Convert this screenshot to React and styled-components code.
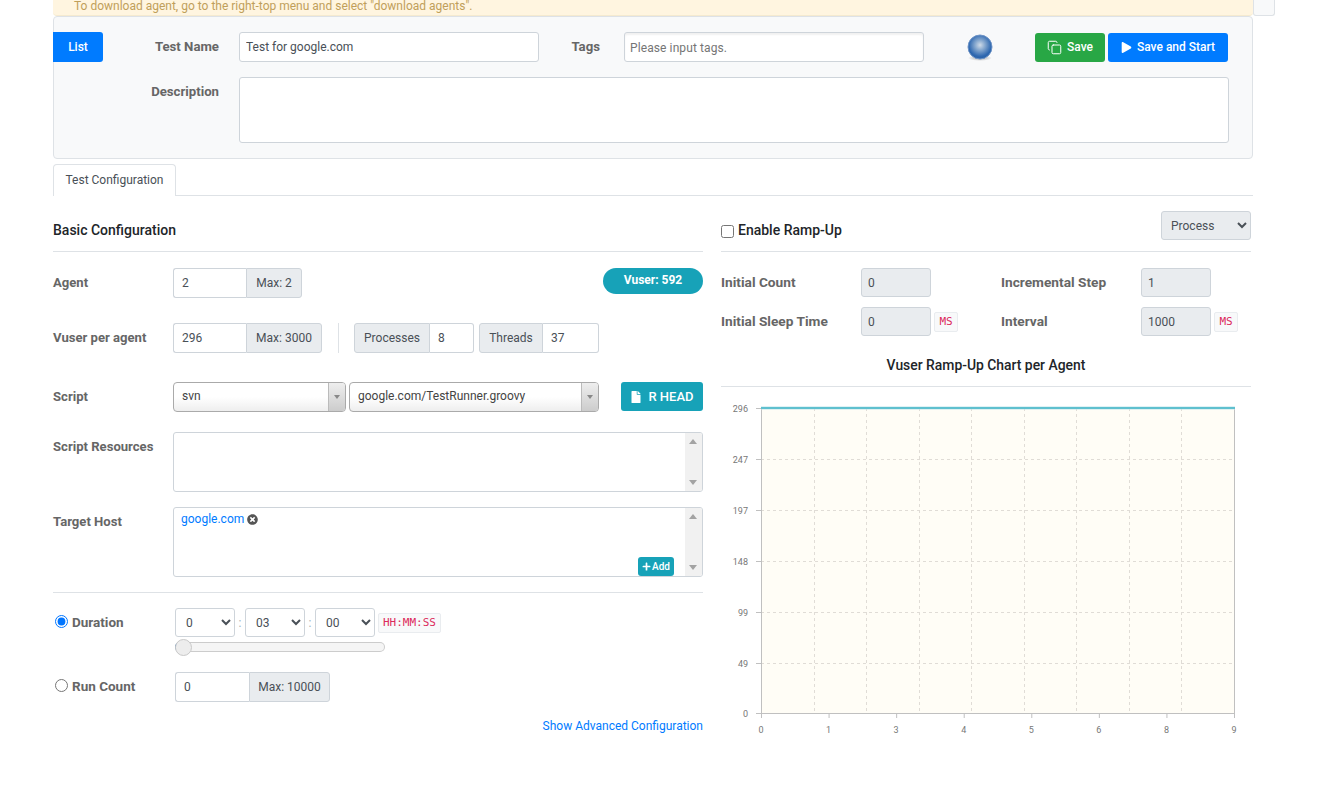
import React from 'react'
import styled, { createGlobalStyle } from 'styled-components'
import { FaFile, FaPlay, FaPlus, FaTimesCircle } from 'react-icons/fa'
import { Copy } from 'lucide-react'

const GlobalStyle = createGlobalStyle`
    * {
        box-sizing: border-box;
    }
    body {
        margin: 0;
        background: #fff;
        font-family: Roboto, "Liberation Sans", sans-serif;
        font-size: 12px;
        color: #495057;
    }
`

const App = () => {
    return (
        <Page>
            <GlobalStyle />
            <TopRow>
                <Alert>To download agent, go to the right-top menu and select "download agents".</Alert>
                <MenuStub />
            </TopRow>
            <Panel>
                <PanelRow>
                    <ListButton>List</ListButton>
                    <HeadLabel $width={116}>Test Name</HeadLabel>
                    <HeadInput defaultValue="Test for google.com" />
                    <HeadLabel $width={61}>Tags</HeadLabel>
                    <TagsInput placeholder="Please input tags." />
                    <Globe />
                    <ActionButton $color="#28a745" $width={70} $left={42}>
                        <Copy size={15} strokeWidth={1.6} /> Save
                    </ActionButton>
                    <ActionButton $color="#007bff" $width={120} $left={3}>
                        <FaPlay size={11} /> Save and Start
                    </ActionButton>
                </PanelRow>
                <DescriptionRow>
                    <DescriptionLabel>Description</DescriptionLabel>
                    <DescriptionBox />
                </DescriptionRow>
            </Panel>
            <TabBar>
                <Tab>Test Configuration</Tab>
            </TabBar>
            <Columns>
                <BasicColumn />
                <RampUpColumn />
            </Columns>
        </Page>
    )
}

const BasicColumn = () => (
    <LeftColumn>
        <SectionHeader>Basic Configuration</SectionHeader>

        <FormRow $top={16}>
            <FieldLabel>Agent</FieldLabel>
            <InputGroup>
                <GroupInput $width={73} defaultValue="2" />
                <Addon $width={56} $last>Max: 2</Addon>
            </InputGroup>
            <VuserPill>Vuser: 592</VuserPill>
        </FormRow>

        <FormRow $top={25}>
            <FieldLabel>Vuser per agent</FieldLabel>
            <InputGroup>
                <GroupInput $width={73} defaultValue="296" />
                <Addon $width={76} $last>Max: 3000</Addon>
            </InputGroup>
            <VerticalRule />
            <InputGroup>
                <Addon $width={76}>Processes</Addon>
                <GroupInput $width={44} $last defaultValue="8" />
            </InputGroup>
            <ThreadsGroup>
                <Addon $width={64}>Threads</Addon>
                <GroupInput $width={56} $last defaultValue="37" />
            </ThreadsGroup>
        </FormRow>

        <FormRow $top={29}>
            <FieldLabel>Script</FieldLabel>
            <ComboBox $width={173}>
                <ComboText>svn</ComboText>
                <ComboArrow />
            </ComboBox>
            <ComboBox $width={250} $left={3}>
                <ComboText>google.com/TestRunner.groovy</ComboText>
                <ComboArrow />
            </ComboBox>
            <HeadButton><FaFile size={12} /> R HEAD</HeadButton>
        </FormRow>

        <FormRow $top={20} $start>
            <TopLabel>Script Resources</TopLabel>
            <ListBox $height={60}>
                <FakeScrollbar />
            </ListBox>
        </FormRow>

        <FormRow $top={15} $start>
            <TopLabel>Target Host</TopLabel>
            <ListBox $height={70}>
                <HostTag>
                    google.com <FaTimesCircle size={11} color="#555" />
                </HostTag>
                <AddButton><FaPlus size={9} />Add</AddButton>
                <FakeScrollbar />
            </ListBox>
        </FormRow>

        <Rule />

        <DurationRow>
            <RadioLabel>
                <input type="radio" name="limit" defaultChecked />
                Duration
            </RadioLabel>
            <div>
                <TimeRow>
                    <TimeSelect defaultValue="0">
                        <option value="0">0</option>
                    </TimeSelect>
                    <Colon>:</Colon>
                    <TimeSelect defaultValue="03">
                        <option value="03">03</option>
                    </TimeSelect>
                    <Colon>:</Colon>
                    <TimeSelect defaultValue="00">
                        <option value="00">00</option>
                    </TimeSelect>
                    <FormatHint>HH:MM:SS</FormatHint>
                </TimeRow>
                <SliderTrack>
                    <SliderThumb />
                </SliderTrack>
            </div>
        </DurationRow>

        <RunCountRow>
            <RadioLabel>
                <input type="radio" name="limit" />
                Run Count
            </RadioLabel>
            <InputGroup>
                <GroupInput $width={74} defaultValue="0" />
                <Addon $width={81} $last>Max: 10000</Addon>
            </InputGroup>
        </RunCountRow>

        <AdvancedLink href="#advanced">Show Advanced Configuration</AdvancedLink>
    </LeftColumn>
)

const RampUpColumn = () => (
    <RightColumn>
        <RampHeader>
            <RampToggle>
                <input type="checkbox" />
                Enable Ramp-Up
            </RampToggle>
            <ProcessSelect defaultValue="Process">
                <option>Process</option>
            </ProcessSelect>
        </RampHeader>

        <RampGrid>
            <RampLabel>Initial Count</RampLabel>
            <RampCell>
                <RampInput disabled defaultValue="0" />
            </RampCell>
            <RampLabel>Incremental Step</RampLabel>
            <RampCell>
                <RampInput disabled defaultValue="1" />
            </RampCell>
            <RampLabel>Initial Sleep Time</RampLabel>
            <RampCell>
                <RampInput disabled defaultValue="0" />
                <UnitHint>MS</UnitHint>
            </RampCell>
            <RampLabel>Interval</RampLabel>
            <RampCell>
                <RampInput disabled defaultValue="1000" />
                <UnitHint>MS</UnitHint>
            </RampCell>
        </RampGrid>

        <ChartTitle>Vuser Ramp-Up Chart per Agent</ChartTitle>
        <RampChart />
    </RightColumn>
)

const plot = { left: 40, right: 513, top: 12, bottom: 317 }
const yLabels = [
    ['296', 12], ['247', 63], ['197', 114], ['148', 165], ['99', 216], ['49', 267], ['0', 317],
]
const xLabels = ['0', '1', '3', '4', '5', '6', '8', '9']
const plotWidth = plot.right - plot.left

const RampChart = () => (
    <ChartSvg width="530" height="350" viewBox="0 0 530 350">
        <rect x={plot.left} y={plot.top} width={plotWidth} height={plot.bottom - plot.top} fill="#fffdf6" />
        {yLabels.slice(1, 6).map(([label, y]) => (
            <line key={label} x1={plot.left} x2={plot.right - 2} y1={y + 0.5} y2={y + 0.5} stroke="#e0dcd6" strokeDasharray="3 3" />
        ))}
        {Array.from({ length: 8 }, (_, i) => {
            const x = Math.round(plot.left + ((i + 1) * plotWidth) / 9) + 0.5
            return <line key={i} x1={x} x2={x} y1={plot.top} y2={plot.bottom} stroke="#e0dcd6" strokeDasharray="3 3" />
        })}
        <path d={`M${plot.left + 0.5} ${plot.top} V${plot.bottom + 0.5} H${plot.right + 0.5} V${plot.top}`} fill="none" stroke="#c0c0c0" />
        <line x1={plot.left} x2={plot.right + 1} y1={plot.top} y2={plot.top} stroke="#bfe6ec" strokeWidth="3" />
        <line x1={plot.left} x2={plot.right + 1} y1={plot.top} y2={plot.top} stroke="#3fb3c6" strokeWidth="1.5" />
        {yLabels.map(([label, y]) => (
            <g key={label}>
                <line x1={plot.left - 5} x2={plot.left} y1={y + 0.5} y2={y + 0.5} stroke="#c0c0c0" />
                <AxisText x={plot.left - 13} y={y + 3.5} textAnchor="end">{label}</AxisText>
            </g>
        ))}
        {xLabels.map((label, i) => {
            const x = plot.left + (i * plotWidth) / 7
            return (
                <g key={label}>
                    <line x1={x + 0.5} x2={x + 0.5} y1={plot.bottom} y2={plot.bottom + 5} stroke="#c0c0c0" />
                    <AxisText x={x} y={plot.bottom + 20} textAnchor="middle">{label}</AxisText>
                </g>
            )
        })}
    </ChartSvg>
)

const Globe = () => (
    <GlobeIcon width="26" height="27" viewBox="0 0 26 27">
        <defs>
            <radialGradient id="ball" cx="50%" cy="42%" r="55%">
                <stop offset="0%" stopColor="#cfdbe8" />
                <stop offset="40%" stopColor="#82a5cd" />
                <stop offset="85%" stopColor="#2f68b0" />
                <stop offset="100%" stopColor="#2a62a8" />
            </radialGradient>
            <radialGradient id="shade" cx="50%" cy="50%" r="50%">
                <stop offset="0%" stopColor="#808080" stopOpacity="0.7" />
                <stop offset="100%" stopColor="#808080" stopOpacity="0" />
            </radialGradient>
        </defs>
        <ellipse cx="13" cy="24" rx="12" ry="3" fill="url(#shade)" />
        <circle cx="13" cy="13" r="12" fill="url(#ball)" stroke="#6d93c6" />
    </GlobeIcon>
)

const Page = styled.div`
    width: 1222px;
    margin-left: 53px;
    padding-bottom: 54px;
`

const TopRow = styled.div`
    display: flex;
    height: 16px;
`

const Alert = styled.div`
    width: 1200px;
    padding-left: 21px;
    background: #fff5e0;
    color: #bf9f5b;
    line-height: 12px;
    border-bottom: 1px solid #f5ead0;
    border-radius: 0 0 4px 4px;
    white-space: nowrap;
`

const MenuStub = styled.div`
    width: 22px;
    background: #f8f9fa;
    border: 1px solid #dee2e6;
    border-top: 0;
    border-radius: 0 0 3px 3px;
`

const Panel = styled.div`
    width: 1200px;
    height: 143px;
    padding: 15px 0;
    background: #f8f9fa;
    border: 1px solid #dee2e6;
    border-radius: 4px;
`

const PanelRow = styled.div`
    display: flex;
    align-items: center;
    height: 30px;
`

const ListButton = styled.button`
    width: 50px;
    height: 30px;
    margin-left: -1px;
    padding: 0;
    border: 0;
    border-radius: 0 3px 3px 0;
    background: #007bff;
    color: #fff;
    font: 500 12px Roboto, sans-serif;
`

const HeadLabel = styled.label`
    width: ${({ $width }) => $width}px;
    padding-bottom: 1px;
    text-align: right;
    font-size: 13.2px;
    font-weight: 700;
    color: #666;
`

const TextField = styled.input`
    height: 30px;
    padding: 0 6px;
    background: #fff;
    border: 1px solid #ced4da;
    border-radius: 3px;
    color: #495057;
    font: 12px Roboto, sans-serif;
    outline: none;
`

const HeadInput = styled(TextField)`
    width: 300px;
    margin-left: 20px;
`

const TagsInput = styled(TextField)`
    width: 300px;
    margin-left: 24px;
    padding: 1px 5px 0;
    box-shadow: inset 0 2px 2px rgba(0, 0, 0, 0.06);

    &::placeholder {
        color: #757575;
        letter-spacing: 0.1px;
    }
`

const GlobeIcon = styled.svg`
    margin-left: 43px;
`

const ActionButton = styled.button`
    display: inline-flex;
    align-items: center;
    justify-content: center;
    gap: 5px;
    width: ${({ $width }) => $width}px;
    height: 29px;
    margin-left: ${({ $left }) => $left}px;
    padding: 0;
    border: 0;
    border-radius: 3px;
    background: ${({ $color }) => $color};
    color: #fff;
    font: 500 12px Roboto, sans-serif;
`

const DescriptionRow = styled.div`
    display: flex;
    margin-top: 15px;
`

const DescriptionLabel = styled(HeadLabel)`
    width: 165px;
    padding-top: 7px;
`

const DescriptionBox = styled.div`
    width: 990px;
    height: 66px;
    margin-left: 20px;
    background: #fff;
    border: 1px solid #ced4da;
    border-radius: 3px;
`

const TabBar = styled.div`
    display: flex;
    width: 1200px;
    height: 32px;
    margin-top: 5px;
    border-bottom: 1px solid #dee2e6;
`

const Tab = styled.div`
    width: 123px;
    height: 32px;
    background: #fff;
    border: 1px solid #dee2e6;
    border-bottom: 0;
    border-radius: 4px 4px 0 0;
    color: #495057;
    line-height: 30px;
    text-align: center;
`

const Columns = styled.div`
    display: flex;
    gap: 18px;
    margin-top: 15px;
`

const LeftColumn = styled.section`
    width: 650px;
`

const RightColumn = styled.section`
    width: 530px;
`

const SectionHeader = styled.div`
    height: 41px;
    padding-top: 11px;
    border-bottom: 1px solid #dee2e6;
    color: #212529;
    font-size: 14px;
    font-weight: 500;
    line-height: 17px;
`

const FormRow = styled.div`
    display: flex;
    align-items: ${({ $start }) => ($start ? 'flex-start' : 'center')};
    margin-top: ${({ $top }) => $top}px;
`

const FieldLabel = styled.label`
    flex: none;
    width: 120px;
    padding-bottom: 2px;
    font-size: 13.1px;
    font-weight: 700;
    color: #666;
`

const TopLabel = styled(FieldLabel)`
    padding-top: 7px;
`

const InputGroup = styled.div`
    display: flex;
    height: 30px;
`

const ThreadsGroup = styled(InputGroup)`
    margin-left: 5px;
`

const GroupInput = styled(TextField)`
    width: ${({ $width }) => $width}px;
    padding: 0 8px;
    border-radius: ${({ $last }) => ($last ? '0 3px 3px 0' : '3px 0 0 3px')};
    ${({ $last }) => ($last ? 'border-left: 0;' : 'border-right: 0;')}
`

const Addon = styled.span`
    display: flex;
    align-items: center;
    justify-content: center;
    width: ${({ $width }) => $width}px;
    background: #e9ecef;
    border: 1px solid #ced4da;
    border-radius: ${({ $last }) => ($last ? '0 3px 3px 0' : '3px 0 0 3px')};
    color: #495057;
    white-space: nowrap;
`

const VuserPill = styled.span`
    align-self: flex-start;
    width: 100px;
    height: 26px;
    margin-left: auto;
    background: #17a2b8;
    border-radius: 13px;
    color: #fff;
    font-weight: 700;
    line-height: 25px;
    text-align: center;
`

const VerticalRule = styled.span`
    width: 1px;
    height: 30px;
    margin: 0 15px 0 16px;
    background: #dee2e6;
`

const ComboBox = styled.div`
    display: flex;
    align-items: center;
    justify-content: space-between;
    width: ${({ $width }) => $width}px;
    height: 30px;
    margin-left: ${({ $left }) => $left || 0}px;
    padding-left: 8px;
    background: linear-gradient(#fff 50%, #eee);
    border: 1px solid #aaa;
    border-radius: 4px;
    color: #444;
    overflow: hidden;
`

const ComboText = styled.span`
    padding-bottom: 2px;
`

const ComboArrow = styled.span`
    position: relative;
    width: 17px;
    height: 100%;
    background: linear-gradient(#eee, #ccc);
    border-left: 1px solid #bbb;

    &::after {
        content: '';
        position: absolute;
        top: 12px;
        left: 5px;
        border-top: 4px solid #888;
        border-left: 3px solid transparent;
        border-right: 3px solid transparent;
    }
`

const HeadButton = styled.button`
    display: inline-flex;
    align-self: flex-start;
    align-items: center;
    justify-content: center;
    gap: 6px;
    width: 82px;
    height: 29px;
    margin-left: 22px;
    padding: 0;
    border: 0;
    border-radius: 3px;
    background: #17a2b8;
    color: #fff;
    font: 500 13px Roboto, sans-serif;
`

const ListBox = styled.div`
    position: relative;
    width: 530px;
    height: ${({ $height }) => $height}px;
    padding: 4px 7px;
    background: #fff;
    border: 1px solid #ced4da;
    border-radius: 3px;
    overflow: hidden;
`

const FakeScrollbar = styled.span`
    position: absolute;
    top: 0;
    right: 0;
    bottom: 0;
    width: 17px;
    background: #f1f1f1;

    &::before,
    &::after {
        content: '';
        position: absolute;
        left: 4px;
        border-left: 4px solid transparent;
        border-right: 4px solid transparent;
    }
    &::before {
        top: 6px;
        border-bottom: 5px solid #a3a3a3;
    }
    &::after {
        bottom: 6px;
        border-top: 5px solid #a3a3a3;
    }
`

const HostTag = styled.span`
    display: inline-flex;
    align-items: center;
    gap: 3px;
    color: #007bff;
`

const AddButton = styled.button`
    position: absolute;
    right: 28px;
    bottom: 0;
    display: inline-flex;
    align-items: center;
    justify-content: center;
    gap: 1px;
    width: 36px;
    height: 19px;
    padding: 0;
    border: 0;
    border-radius: 3px;
    background: #17a2b8;
    color: #fff;
    font: 500 10px Roboto, sans-serif;
`

const Rule = styled.hr`
    margin: 15px 0 0;
    border: 0;
    border-top: 1px solid #dee2e6;
`

const DurationRow = styled.div`
    display: flex;
    margin-top: 15px;
`

const RunCountRow = styled.div`
    display: flex;
    margin-top: 20px;
`

const RadioLabel = styled.label`
    display: flex;
    align-items: center;
    gap: 4px;
    flex: none;
    width: 122px;
    height: 29px;
    padding-left: 2px;
    padding-bottom: 1px;
    font-size: 13.5px;
    font-weight: 700;
    color: #666;

    input {
        width: 13px;
        height: 13px;
        margin: -1px 0 0;
    }
`

const TimeRow = styled.div`
    display: flex;
    align-items: center;
`

const TimeSelect = styled.select`
    width: 60px;
    height: 29px;
    padding: 0 6px;
    background-color: #fff;
    border: 1px solid #ced4da;
    border-radius: 3px;
    color: #495057;
    font: 12px Roboto, sans-serif;
`

const Colon = styled.span`
    width: 10px;
    color: #9fb4b8;
    text-align: center;
`

const FormatHint = styled.code`
    width: 63px;
    height: 20px;
    margin-left: 3px;
    background: #f8f9fa;
    border: 1px solid #e9ecef;
    border-radius: 2px;
    color: #dc2a5c;
    font: 11px/18px "DejaVu Sans Mono", monospace;
    text-align: center;
`

const SliderTrack = styled.div`
    position: relative;
    width: 210px;
    height: 10px;
    margin-top: 5px;
    background: #f5f5f5;
    border: 1px solid #ccc;
    border-left: 2px solid #2a6db0;
    border-radius: 5px;
`

const SliderThumb = styled.span`
    position: absolute;
    top: -4px;
    left: -2px;
    width: 17px;
    height: 17px;
    background: #ededed;
    border: 1px solid #c8c8c8;
    border-radius: 50%;
`

const AdvancedLink = styled.a`
    display: block;
    margin-top: 16px;
    color: #007bff;
    line-height: 16px;
    text-align: right;
    text-decoration: none;
`

const RampHeader = styled.div`
    display: flex;
    justify-content: space-between;
    height: 41px;
    border-bottom: 1px solid #dee2e6;
`

const RampToggle = styled.label`
    display: flex;
    align-items: center;
    gap: 4px;
    height: 17px;
    margin-top: 10px;
    color: #212529;
    font-size: 14px;
    font-weight: 500;

    input {
        width: 13px;
        height: 13px;
        margin: 3px 0 0;
    }
`

const ProcessSelect = styled.select`
    width: 90px;
    height: 29px;
    padding: 0 5px;
    background-color: #e9ecef;
    border: 1px solid #ced4da;
    border-radius: 3px;
    color: #495057;
    font: 12px Roboto, sans-serif;
`

const RampGrid = styled.div`
    display: grid;
    grid-template-columns: 140px 140px 140px 110px;
    grid-auto-rows: 29px;
    row-gap: 10px;
    align-items: center;
    margin-top: 16px;
`

const RampLabel = styled.label`
    padding-bottom: 2px;
    font-size: 13.7px;
    font-weight: 700;
    color: #666;
`

const RampCell = styled.div`
    display: flex;
    align-items: center;
`

const RampInput = styled(TextField)`
    width: 70px;
    height: 29px;
    padding: 0 6px;

    &:disabled {
        background: #e9ecef;
    }
`

const UnitHint = styled.code`
    width: 24px;
    height: 20px;
    margin-left: 3px;
    background: #f8f9fa;
    border: 1px solid #e9ecef;
    border-radius: 2px;
    color: #dc2a5c;
    font: 11px/18px "DejaVu Sans Mono", monospace;
    text-align: center;
`

const ChartTitle = styled.div`
    height: 51px;
    padding-top: 21px;
    border-bottom: 1px solid #dee2e6;
    color: #212529;
    font-size: 13.9px;
    font-weight: 500;
    line-height: 17px;
    text-align: center;
`

const ChartSvg = styled.svg`
    display: block;
    margin-top: 9px;
`

const AxisText = styled.text`
    fill: #777;
    font: 9px Roboto, sans-serif;
`

export default App
